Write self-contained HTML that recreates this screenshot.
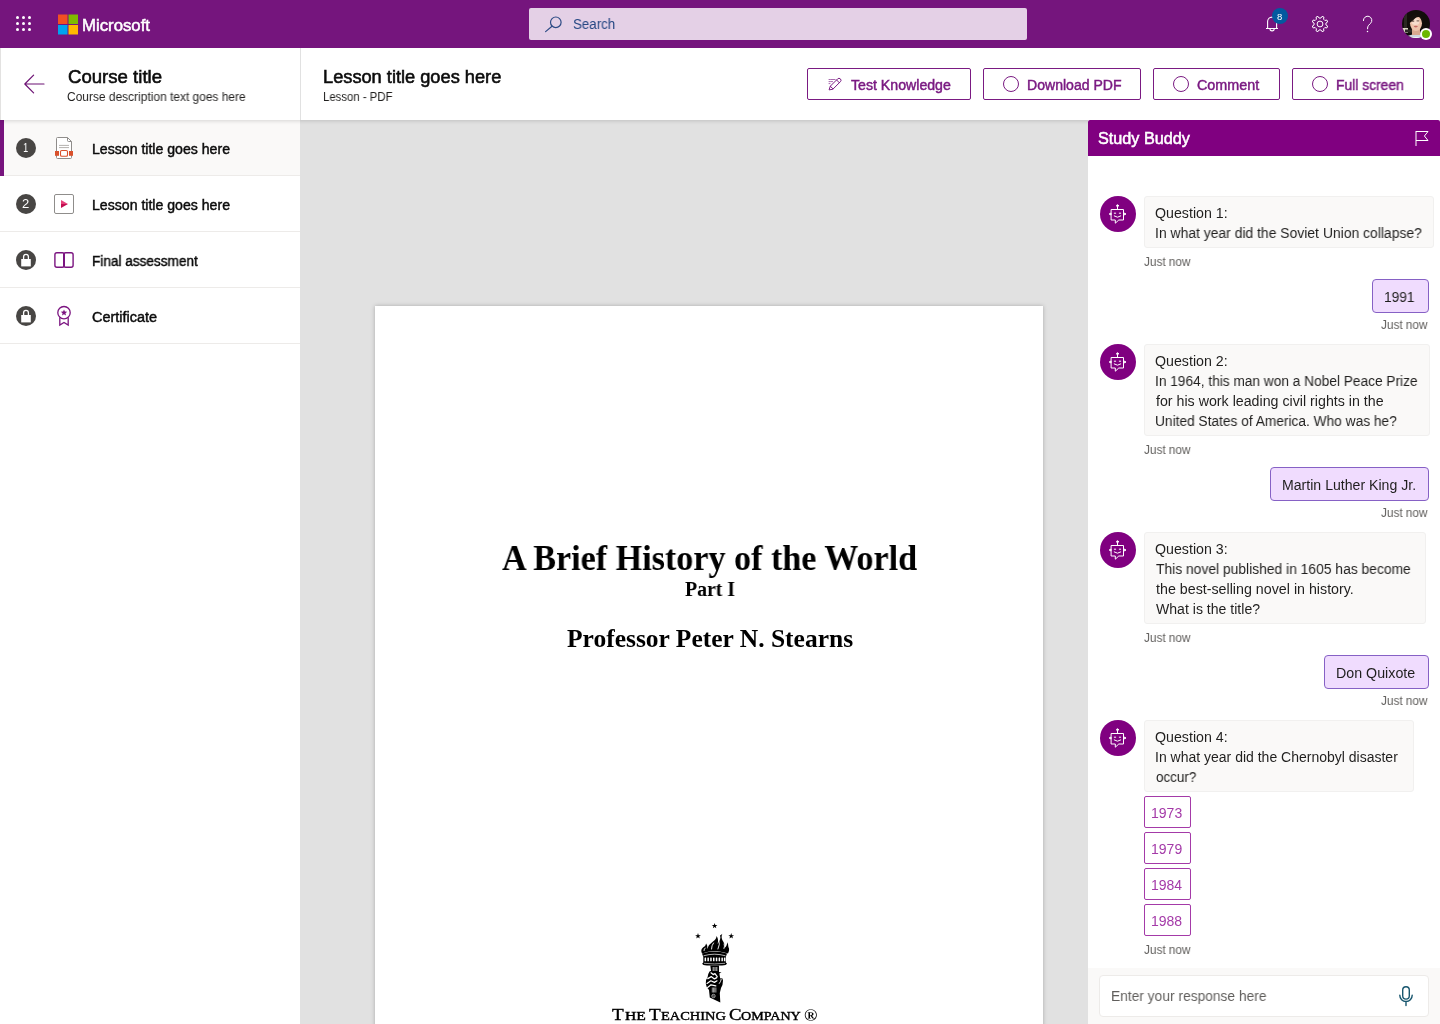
<!DOCTYPE html>
<html lang="en">
<head>
<meta charset="utf-8">
<title>Lesson - Study Buddy</title>
<style>
*{box-sizing:border-box;margin:0;padding:0}
html,body{width:1440px;height:1024px;overflow:hidden;background:#fff}
body{font-family:"Liberation Sans",sans-serif;color:#201f1e;position:relative}
#root{position:absolute;left:0;top:0;width:1440px;height:1024px}
.grp{position:absolute;left:0;top:0;width:0;height:0}
.a{position:absolute}
.t{position:absolute;white-space:nowrap;line-height:1;transform-origin:0 0;will-change:transform}
.sf{font-family:"Liberation Serif",serif}
svg{position:absolute;overflow:visible}
#top{position:absolute;left:0;top:0;width:1440px;height:48px;background:#75157d}
#search{position:absolute;left:529px;top:8px;width:498px;height:32px;background:#e4d0e6;border-radius:2px}
#sub{position:absolute;left:0;top:48px;width:1440px;height:72px;background:#fff;box-shadow:0 1px 4px rgba(0,0,0,.15)}
#subdiv{position:absolute;left:300px;top:48px;width:1px;height:72px;background:#e1e1e1}
#subl{position:absolute;left:0;top:48px;width:1px;height:72px;background:#e3e2e1}
.btn{position:absolute;top:68px;height:32px;border:1px solid #7a1a82;border-radius:2px;background:#fff}
.ring{position:absolute;top:76px;width:16px;height:16px;border:1px solid #7a1a82;border-radius:50%}
#side{position:absolute;left:0;top:120px;width:300px;height:904px;background:#fff}
.item{position:absolute;left:0;width:300px;height:56px;border-bottom:1px solid #edebe9}
.sel{background:#faf9f8}
.selbar{position:absolute;left:0;top:120px;width:4px;height:56px;background:#77147e}
.num{position:absolute;left:16px;width:20px;height:20px;border-radius:50%;background:#484644}
#main{position:absolute;left:300px;top:120px;width:788px;height:904px;background:#e1e1e1}
#page{position:absolute;left:375px;top:306px;width:668px;height:760px;background:#fff;box-shadow:0 0 4px rgba(0,0,0,.25)}
#bud{position:absolute;left:1088px;top:120px;width:352px;height:904px;background:#fff}
#budh{position:absolute;left:1088px;top:120px;width:352px;height:36px;background:#800080;border-radius:2px 2px 0 0}
.av{position:absolute;left:1100px;width:36px;height:36px;border-radius:50%;background:#800080}
.bub{position:absolute;left:1144px;background:#faf9f8;border:1px solid #f1f0ef;border-radius:3px}
.ans{position:absolute;background:#f0dcfe;border:1px solid #8661c5;border-radius:4px;height:34px}
.opt{position:absolute;left:1144px;width:47px;height:32px;border:1px solid #a43aa8;border-radius:2px;background:#fff}
#inp{position:absolute;left:1088px;top:968px;width:352px;height:56px;background:#faf9f8}
#inpb{position:absolute;left:1099px;top:975px;width:330px;height:42px;background:#fff;border:1px solid #edebe9;border-radius:4px}
</style>
</head>
<body>
<div id="root">
<div id="main"></div>
<div id="page"></div>
<span class="t sf" style="left:501.89px;top:539.75px;font-size:36px;font-weight:700;color:#000;transform:scaleX(0.9471);">A Brief History of the World</span>
<span class="t sf" style="left:684.66px;top:579.15px;font-size:20px;font-weight:700;color:#000;transform:scaleX(0.9895);">Part I</span>
<span class="t sf" style="left:567.20px;top:626.06px;font-size:25px;font-weight:700;color:#000;transform:scaleX(1.0200);">Professor Peter N. Stearns</span>
<svg width="1440" height="1024" viewBox="0 0 1440 1024" style="left:0;top:0" fill="none">
<path d="M714.60 922.90 L715.31 924.93 L717.45 924.97 L715.74 926.27 L716.36 928.33 L714.60 927.10 L712.84 928.33 L713.46 926.27 L711.75 924.97 L713.89 924.93Z" fill="#000"/>
<path d="M698.00 933.10 L698.71 935.13 L700.85 935.17 L699.14 936.47 L699.76 938.53 L698.00 937.30 L696.24 938.53 L696.86 936.47 L695.15 935.17 L697.29 935.13Z" fill="#000"/>
<path d="M731.20 933.10 L731.91 935.13 L734.05 935.17 L732.34 936.47 L732.96 938.53 L731.20 937.30 L729.44 938.53 L730.06 936.47 L728.35 935.17 L730.49 935.13Z" fill="#000"/>
<path fill="#000" d="M702 953.5 Q700.2 949.5 703 947.5 Q706 945.5 706.2 943.5 Q708.2 946 707 949 Q709 944 713 941.5 Q716.5 939 716.5 936 Q719 939.5 717.5 944 Q721.5 938.5 720 935.5 Q722 934.5 722.3 933.8 Q720.5 938 723.5 942 Q725.5 945 724.5 948 Q727.5 945.5 727 942.3 Q728.6 944 728.4 947 Q730 949.5 728 953.5 Q720 951 714.5 951 Q708 951 702 953.5Z"/>
<path stroke="#fff" stroke-width=".9" stroke-linecap="round" d="M711.5 949 Q711.5 945.5 713.5 943 M718 949 Q720.5 944 718.8 940 M724 948.5 Q725 946 724.2 944 M704 950.5 Q704 949 705.2 948"/>
<path fill="#000" d="M702 953.5 Q714.5 949.5 727 953.5 L725.8 957 V962.5 L727 963.5 Q726.5 965.3 722 965.6 H707 Q702.5 965.3 702.2 963.5 L703.3 962.5 V957Z"/>
<path stroke="#fff" stroke-width=".7" d="M703.5 955.8 Q714.5 952.6 725.5 955.8"/>
<g fill="#fff"><rect x="704.6" y="957.6" width="1.5" height="3.6" rx=".5"/><rect x="707.4" y="957.6" width="1.5" height="3.6" rx=".5"/><rect x="710.2" y="957.6" width="1.5" height="3.6" rx=".5"/><rect x="713.0" y="957.6" width="1.5" height="3.6" rx=".5"/><rect x="715.8" y="957.6" width="1.5" height="3.6" rx=".5"/><rect x="718.6" y="957.6" width="1.5" height="3.6" rx=".5"/><rect x="721.4" y="957.6" width="1.5" height="3.6" rx=".5"/><rect x="723.9" y="957.6" width="1.5" height="3.6" rx=".5"/></g>
<path stroke="#fff" stroke-width=".6" d="M704 963.3 Q714.5 964.6 725 963.3"/>
<path fill="#000" d="M710.3 965.5 H719 V972 L721.5 972.6 L719 973.4 V978 H712 Z"/>
<path stroke="#fff" stroke-width=".8" d="M713.2 967 V971 M715 967 V971 M716.8 967 V971"/>
<path fill="#000" d="M709.5 971.5 Q712.5 969.5 715 972.5 L718 975.5 L719.2 972.5 L720.2 978.5 Q722.5 977 723 980.5 Q723 985 721 988 L719.8 993 L720.3 1002.6 L709.8 997.5 L709 990 Q705.8 986.5 705.8 983.5 Q705.5 979.5 707.5 977.5 Q707.8 974 709.5 971.5Z"/>
<path stroke="#fff" stroke-width="1.25" stroke-linecap="round" stroke-linejoin="round" fill="none" d="M711 972.8 L713.2 974.6 L715 973.6 L717.2 976.6 M707.8 978.6 L711.2 976.6 L714.4 978.9 L716.8 977.6 M707 983.4 L710.8 980.8 L714.4 982.4 L717 980.8 M707.6 987.4 L711 984.8 L715.8 985.8"/>
<path stroke="#fff" stroke-width=".9" stroke-linecap="round" d="M719.3 983.5 Q721 981.5 721.3 979"/>
<path stroke="#fff" stroke-width=".6" d="M712.3 987.5 V992.5 M713.5 987.5 V992.5 M714.7 987.5 V992.5 M715.9 987.5 V992.5"/>
<circle cx="713.5" cy="996" r="1.7" stroke="#fff" stroke-width=".6"/><path d="M712.6 995.4 L714.3 996.6" stroke="#fff" stroke-width=".6"/>
</svg>
<span class="a" style="left:0;top:0;white-space:nowrap"><span class="t sf" style="left:612.33px;top:1006.14px;font-size:17.5px;font-weight:400;color:#000;transform:scaleX(1.0963);-webkit-text-stroke:.4px #000;">T</span><span class="t sf" style="left:624.73px;top:1009.83px;font-size:12.5px;font-weight:400;color:#000;transform:scaleX(1.2480);-webkit-text-stroke:.4px #000;">HE</span> <span class="t sf" style="left:648.63px;top:1006.14px;font-size:17.5px;font-weight:400;color:#000;transform:scaleX(1.0963);-webkit-text-stroke:.4px #000;">T</span><span class="t sf" style="left:661.07px;top:1009.83px;font-size:12.5px;font-weight:400;color:#000;transform:scaleX(1.1532);-webkit-text-stroke:.4px #000;">EACHING</span> <span class="t sf" style="left:728.90px;top:1006.14px;font-size:17.5px;font-weight:400;color:#000;transform:scaleX(1.0700);-webkit-text-stroke:.4px #000;">C</span><span class="t sf" style="left:740.54px;top:1009.83px;font-size:12.5px;font-weight:400;color:#000;transform:scaleX(1.1273);-webkit-text-stroke:.4px #000;">OMPANY</span> <span class="t sf" style="left:804.21px;top:1006.76px;font-size:17px;font-weight:700;color:#000;transform:scaleX(1.0522);">®</span></span>
<div id="side"></div>
<div class="item sel" style="top:120px"></div>
<div class="item" style="top:176px"></div>
<div class="item" style="top:232px"></div>
<div class="item" style="top:288px"></div>
<div class="selbar"></div>
<div class="num" style="top:138px"></div>
<div class="num" style="top:194px"></div>
<div class="num" style="top:250px"></div>
<div class="num" style="top:306px"></div>
<span class="t" style="left:91.66px;top:142.15px;font-size:14px;font-weight:400;color:#0c0c0c;transform:scaleX(1.0073);-webkit-text-stroke:0.45px #0c0c0c;">Lesson title goes here</span>
<span class="t" style="left:91.66px;top:198.15px;font-size:14px;font-weight:400;color:#0c0c0c;transform:scaleX(1.0073);-webkit-text-stroke:0.45px #0c0c0c;">Lesson title goes here</span>
<span class="t" style="left:91.70px;top:254.15px;font-size:14px;font-weight:400;color:#0c0c0c;transform:scaleX(0.9710);-webkit-text-stroke:0.45px #0c0c0c;">Final assessment</span>
<span class="t" style="left:91.94px;top:310.15px;font-size:14px;font-weight:400;color:#0c0c0c;transform:scaleX(1.0335);-webkit-text-stroke:0.45px #0c0c0c;">Certificate</span>
<span class="t" style="left:23.33px;top:142.42px;font-size:12.5px;font-weight:400;color:#fff;transform:scaleX(0.7636);">1</span>
<span class="t" style="left:22.25px;top:198.42px;font-size:12.5px;font-weight:400;color:#fff;transform:scaleX(1.0435);">2</span>
<div id="sub"></div><div id="subdiv"></div><div id="subl"></div>
<span class="t" style="left:67.93px;top:68.06px;font-size:18px;font-weight:400;color:#0c0c0c;transform:scaleX(1.0327);-webkit-text-stroke:0.58px #0c0c0c;">Course title</span>
<span class="t" style="left:67.17px;top:90.84px;font-size:12px;font-weight:400;color:#201f1e;transform:scaleX(0.9957);">Course description text goes here</span>
<span class="t" style="left:323.16px;top:68.06px;font-size:18px;font-weight:400;color:#0c0c0c;transform:scaleX(1.0123);-webkit-text-stroke:0.58px #0c0c0c;">Lesson title goes here</span>
<span class="t" style="left:323.05px;top:90.84px;font-size:12px;font-weight:400;color:#201f1e;transform:scaleX(0.9486);">Lesson - PDF</span>
<div class="btn" style="left:807px;width:164px"></div>
<div class="btn" style="left:983px;width:158px"></div>
<div class="btn" style="left:1153px;width:127px"></div>
<div class="btn" style="left:1292px;width:132px"></div>
<div class="ring" style="left:1002.7px"></div>
<div class="ring" style="left:1172.7px"></div>
<div class="ring" style="left:1312.0px"></div>
<span class="t" style="left:851.32px;top:77.75px;font-size:14px;font-weight:400;color:#7a1a82;transform:scaleX(1.0101);-webkit-text-stroke:0.45px #7a1a82;">Test Knowledge</span>
<span class="t" style="left:1026.72px;top:77.75px;font-size:14px;font-weight:400;color:#7a1a82;transform:scaleX(1.0043);-webkit-text-stroke:0.45px #7a1a82;">Download PDF</span>
<span class="t" style="left:1197.39px;top:77.75px;font-size:14px;font-weight:400;color:#7a1a82;transform:scaleX(1.0243);-webkit-text-stroke:0.45px #7a1a82;">Comment</span>
<span class="t" style="left:1335.73px;top:77.75px;font-size:14px;font-weight:400;color:#7a1a82;transform:scaleX(0.9897);-webkit-text-stroke:0.45px #7a1a82;">Full screen</span>
<div id="top"></div><div id="search"></div>
<span class="t" style="left:82.33px;top:16.53px;font-size:16.5px;font-weight:400;color:#fff;transform:scaleX(1.0159);-webkit-text-stroke:0.53px #fff;">Microsoft</span>
<span class="t" style="left:572.78px;top:17.15px;font-size:14px;font-weight:400;color:#254783;transform:scaleX(0.9526);">Search</span>
<div id="bud"></div>
<div id="budh"></div>
<span class="t" style="left:1097.51px;top:131.46px;font-size:16px;font-weight:400;color:#fff;transform:scaleX(1.0133);-webkit-text-stroke:0.51px #fff;">Study Buddy</span>
<div class="av" style="top:196px"></div>
<div class="bub" style="top:196px;width:290px;height:52px"></div>
<span class="t" style="left:1155.25px;top:206.15px;font-size:14px;font-weight:400;color:#201f1e;transform:scaleX(1.0147);">Question 1:</span>
<span class="t" style="left:1155.05px;top:226.15px;font-size:14px;font-weight:400;color:#201f1e;transform:scaleX(0.9938);">In what year did the Soviet Union collapse?</span>
<span class="t" style="left:1143.74px;top:256.14px;font-size:12px;font-weight:400;color:#605e5c;transform:scaleX(0.9806);">Just now</span>
<div class="ans" style="left:1372px;top:279px;width:57px"></div>
<span class="t" style="left:1384.27px;top:290.15px;font-size:14px;font-weight:400;color:#201f1e;transform:scaleX(0.9823);">1991</span>
<span class="t" style="left:1380.74px;top:318.59px;font-size:12px;font-weight:400;color:#605e5c;transform:scaleX(0.9806);">Just now</span>
<div class="av" style="top:344px"></div>
<div class="bub" style="top:344px;width:286px;height:92px"></div>
<span class="t" style="left:1155.25px;top:354.15px;font-size:14px;font-weight:400;color:#201f1e;transform:scaleX(1.0147);">Question 2:</span>
<span class="t" style="left:1155.07px;top:374.15px;font-size:14px;font-weight:400;color:#201f1e;transform:scaleX(0.9779);">In 1964, this man won a Nobel Peace Prize</span>
<span class="t" style="left:1156.13px;top:394.15px;font-size:14px;font-weight:400;color:#201f1e;transform:scaleX(1.0155);">for his work leading civil rights in the</span>
<span class="t" style="left:1155.39px;top:414.15px;font-size:14px;font-weight:400;color:#201f1e;transform:scaleX(0.9802);">United States of America. Who was he?</span>
<span class="t" style="left:1143.74px;top:444.14px;font-size:12px;font-weight:400;color:#605e5c;transform:scaleX(0.9806);">Just now</span>
<div class="ans" style="left:1270px;top:467px;width:159px"></div>
<span class="t" style="left:1281.82px;top:477.65px;font-size:14px;font-weight:400;color:#201f1e;transform:scaleX(1.0081);">Martin Luther King Jr.</span>
<span class="t" style="left:1380.74px;top:506.59px;font-size:12px;font-weight:400;color:#605e5c;transform:scaleX(0.9806);">Just now</span>
<div class="av" style="top:532px"></div>
<div class="bub" style="top:532px;width:282px;height:92px"></div>
<span class="t" style="left:1155.25px;top:542.15px;font-size:14px;font-weight:400;color:#201f1e;transform:scaleX(1.0147);">Question 3:</span>
<span class="t" style="left:1155.98px;top:562.15px;font-size:14px;font-weight:400;color:#201f1e;transform:scaleX(0.9889);">This novel published in 1605 has become</span>
<span class="t" style="left:1156.05px;top:582.15px;font-size:14px;font-weight:400;color:#201f1e;transform:scaleX(1.0182);">the best-selling novel in history.</span>
<span class="t" style="left:1155.74px;top:602.15px;font-size:14px;font-weight:400;color:#201f1e;transform:scaleX(1.0053);">What is the title?</span>
<span class="t" style="left:1143.74px;top:632.14px;font-size:12px;font-weight:400;color:#605e5c;transform:scaleX(0.9806);">Just now</span>
<div class="ans" style="left:1324px;top:655px;width:105px"></div>
<span class="t" style="left:1336.14px;top:666.15px;font-size:14px;font-weight:400;color:#201f1e;transform:scaleX(1.0177);">Don Quixote</span>
<span class="t" style="left:1380.74px;top:694.84px;font-size:12px;font-weight:400;color:#605e5c;transform:scaleX(0.9806);">Just now</span>
<div class="av" style="top:720px"></div>
<div class="bub" style="top:720px;width:270px;height:72px"></div>
<span class="t" style="left:1155.25px;top:730.15px;font-size:14px;font-weight:400;color:#201f1e;transform:scaleX(1.0147);">Question 4:</span>
<span class="t" style="left:1155.04px;top:750.15px;font-size:14px;font-weight:400;color:#201f1e;transform:scaleX(0.9986);">In what year did the Chernobyl disaster</span>
<span class="t" style="left:1155.64px;top:770.15px;font-size:14px;font-weight:400;color:#201f1e;transform:scaleX(0.9596);">occur?</span>
<div class="opt" style="top:796px"></div>
<span class="t" style="left:1151.25px;top:805.90px;font-size:14px;font-weight:400;color:#a43aa8;transform:scaleX(1.0021);">1973</span>
<div class="opt" style="top:832px"></div>
<span class="t" style="left:1151.25px;top:841.90px;font-size:14px;font-weight:400;color:#a43aa8;transform:scaleX(1.0011);">1979</span>
<div class="opt" style="top:868px"></div>
<span class="t" style="left:1151.26px;top:877.90px;font-size:14px;font-weight:400;color:#a43aa8;transform:scaleX(0.9930);">1984</span>
<div class="opt" style="top:904px"></div>
<span class="t" style="left:1151.25px;top:913.90px;font-size:14px;font-weight:400;color:#a43aa8;transform:scaleX(1.0006);">1988</span>
<span class="t" style="left:1143.74px;top:944.34px;font-size:12px;font-weight:400;color:#605e5c;transform:scaleX(0.9806);">Just now</span>
<div id="inp"></div><div id="inpb"></div>
<span class="t" style="left:1111.43px;top:988.55px;font-size:14px;font-weight:400;color:#605e5c;transform:scaleX(0.9840);">Enter your response here</span>
<svg width="1440" height="1024" viewBox="0 0 1440 1024" style="left:0;top:0" fill="none">
<g fill="#fff"><circle cx="17.5" cy="17.5" r="1.5"/><circle cx="17.5" cy="23.5" r="1.5"/><circle cx="17.5" cy="29.5" r="1.5"/><circle cx="23.5" cy="17.5" r="1.5"/><circle cx="23.5" cy="23.5" r="1.5"/><circle cx="23.5" cy="29.5" r="1.5"/><circle cx="29.5" cy="17.5" r="1.5"/><circle cx="29.5" cy="23.5" r="1.5"/><circle cx="29.5" cy="29.5" r="1.5"/></g>
<rect x="58" y="14.5" width="9.5" height="9.5" fill="#f25022"/><rect x="68.5" y="14.5" width="9.5" height="9.5" fill="#7fba00"/><rect x="58" y="25" width="9.5" height="9.5" fill="#00a4ef"/><rect x="68.5" y="25" width="9.5" height="9.5" fill="#ffb900"/>
<g stroke="#2d4b85" stroke-width="1.2" stroke-linecap="round"><circle cx="555.8" cy="22.3" r="5.3"/><path d="M552 26.2 L545.6 31.6"/></g>
<g stroke="#fff" stroke-width="1.1" stroke-linejoin="round"><path d="M1266 28.5 H1278 M1267.6 28.5 V21.6 A4.5 4.5 0 0 1 1276.6 21.6 V28.5"/><path d="M1270 28.8 A2.1 2.1 0 0 0 1274.2 28.8"/></g>
<circle cx="1280" cy="16" r="8" fill="#03599f"/>
<path d="M1320.94 18.07 L1322.02 16.36 L1323.97 17.17 L1323.53 19.15 L1324.85 20.47 L1326.83 20.03 L1327.64 21.98 L1325.93 23.06 L1325.93 24.94 L1327.64 26.02 L1326.83 27.97 L1324.85 27.53 L1323.53 28.85 L1323.97 30.83 L1322.02 31.64 L1320.94 29.93 L1319.06 29.93 L1317.98 31.64 L1316.03 30.83 L1316.47 28.85 L1315.15 27.53 L1313.17 27.97 L1312.36 26.02 L1314.07 24.94 L1314.07 23.06 L1312.36 21.98 L1313.17 20.03 L1315.15 20.47 L1316.47 19.15 L1316.03 17.17 L1317.98 16.36 L1319.06 18.07Z" stroke="#fff" stroke-width="1" stroke-linejoin="round"/><circle cx="1320" cy="24" r="2.9" stroke="#fff" stroke-width="1"/>
<path d="M1363.4 20.6 A4.2 4.2 0 1 1 1370.6 23.3 L1368.6 25.3 Q1367.5 26.5 1367.5 28.8" stroke="#fff" stroke-width="1" stroke-linecap="round"/><circle cx="1367.5" cy="31.5" r="0.75" fill="#fff"/>
<defs><clipPath id="avc"><circle cx="1416" cy="24" r="14"/></clipPath></defs>
<g clip-path="url(#avc)"><rect x="1402" y="10" width="28" height="28" fill="#120e0b"/><rect x="1404" y="14" width="3" height="16" fill="#2a2822"/><rect x="1402" y="28" width="6" height="5" fill="#ddd8c6"/><rect x="1405" y="29.5" width="7" height="3" fill="#2c2a26"/><path d="M1404 38 Q1409 34 1416 34.5 Q1423 34 1428 38Z" fill="#cfd6e2"/><path d="M1407 37 H1425 V38 H1407Z" fill="#f4f4f6"/><rect x="1412" y="28" width="8" height="7" fill="#d9a88f"/><ellipse cx="1416" cy="23.3" rx="6" ry="7.6" fill="#edc3ab"/><ellipse cx="1415.5" cy="21.5" rx="4" ry="3.5" fill="#f6dccd"/><path d="M1409.3 23 Q1409 16 1414.5 14.6 Q1419 13.8 1421.5 16 Q1424 18.5 1423 25 Q1422.5 20 1420 17.2 Q1417.5 16.3 1415.2 18.2 Q1413 20.8 1409.3 23Z" fill="#15100d"/><ellipse cx="1415.8" cy="26.6" rx="2" ry="0.8" fill="#c46a68"/><rect x="1411.6" y="20.6" width="2.6" height="1" fill="#4a352c"/><rect x="1416.6" y="20.4" width="2.6" height="1" fill="#6b5145"/></g>
<circle cx="1426" cy="34" r="6" fill="#fff"/><circle cx="1426" cy="34" r="4" fill="#6bb700"/>
<path d="M44 84 H24.8 M33.6 75.2 L24.8 84 L33.6 92.8" stroke="#6d1274" stroke-width="1.2" stroke-linecap="round" stroke-linejoin="round"/>
<g stroke="#7a1a82" stroke-width="1" stroke-linejoin="round" stroke-linecap="round"><path d="M829.2 89.5 L830.3 86.2 L837.6 78.9 A1.9 1.9 0 0 1 840.4 81.7 L833.1 89 Z"/><path d="M836.6 80 L839.3 82.7 M830.4 86.3 L832.9 88.8"/><path d="M829 79.5 H835 M829 81.6 H832.6 M829 83.6 H830.6" stroke-opacity=".65" stroke-dasharray="1 .8 10"/></g>
<g stroke="#8f8d8b" stroke-width="1"><path d="M57.5 137.5 H67.5 L71.5 141.5 V157.5 Q71.5 158.5 70.5 158.5 H57.5 Q56.5 158.5 56.5 157.5 V138.5 Q56.5 137.5 57.5 137.5Z" fill="#fff"/><path d="M67.5 137.5 V140.5 Q67.5 141.5 68.5 141.5 H71.5"/><path d="M59 145.4 H69 M59 147.6 H69" stroke="#b5b2af"/></g>
<rect x="55" y="151" width="4" height="4.8" fill="#d9512c"/><rect x="69" y="151" width="4" height="4.8" fill="#d9512c"/><rect x="60.5" y="150.5" width="7" height="5.8" rx="1.3" stroke="#d9512c" stroke-width="1.1" fill="#fff"/>
<rect x="54.5" y="194.5" width="19" height="19" rx="1.5" stroke="#8f8d8b" stroke-width="1" fill="#fff"/>
<path d="M61 200 L68 204 L61 204Z" fill="#e6427a"/><path d="M61 204 L68 204 L61 208Z" fill="#c30e50"/>
<g stroke="#7b1480" stroke-width="1.4"><rect x="54.9" y="252.7" width="9.4" height="14.6" rx="2"/><rect x="63.7" y="252.7" width="9.4" height="14.6" rx="2"/></g>
<g stroke="#7b1480" stroke-width="1.3" stroke-linejoin="miter"><circle cx="64" cy="312.7" r="6.2"/><path d="M59.8 317.6 V325 L64 322.4 L68.2 325 V317.6"/></g><path d="M64.00 309.40 L64.88 311.59 L67.23 311.75 L65.43 313.26 L66.00 315.55 L64.00 314.30 L62.00 315.55 L62.57 313.26 L60.77 311.75 L63.12 311.59Z" fill="#7b1480"/>
<rect x="21.2" y="259.0" width="9.6" height="7.4" fill="#fff"/><path d="M23.6 259.5 V256.8 A2.4 2.4 0 0 1 28.4 256.8 V259.5" stroke="#fff" stroke-width="1.3"/>
<rect x="21.2" y="315.0" width="9.6" height="7.4" fill="#fff"/><path d="M23.6 315.5 V312.8 A2.4 2.4 0 0 1 28.4 312.8 V315.5" stroke="#fff" stroke-width="1.3"/>
<path d="M1416 131 V146 M1416 131.5 H1428 L1424.4 136 L1428 140.5 H1416" stroke="#fff" stroke-width="1" stroke-linejoin="miter"/>
<g transform="translate(0 214)" stroke="#fff" stroke-width="1" stroke-linejoin="round" stroke-linecap="round"><path d="M1111.5 -4.5 H1123.5 V6 H1118.8 L1115.3 9.2 V6 H1111.5Z"/><path d="M1117.5 -4.5 V-7.5"/><circle cx="1117.5" cy="-8.3" r="0.9" fill="#fff"/><circle cx="1110.3" cy="0" r="0.8" fill="#fff"/><circle cx="1124.7" cy="0" r="0.8" fill="#fff"/><path d="M1114.3 -0.8 H1115.7 M1119.3 -0.8 H1120.7"/><path d="M1114.2 2 Q1117.5 4.6 1120.8 2"/></g>
<g transform="translate(0 362)" stroke="#fff" stroke-width="1" stroke-linejoin="round" stroke-linecap="round"><path d="M1111.5 -4.5 H1123.5 V6 H1118.8 L1115.3 9.2 V6 H1111.5Z"/><path d="M1117.5 -4.5 V-7.5"/><circle cx="1117.5" cy="-8.3" r="0.9" fill="#fff"/><circle cx="1110.3" cy="0" r="0.8" fill="#fff"/><circle cx="1124.7" cy="0" r="0.8" fill="#fff"/><path d="M1114.3 -0.8 H1115.7 M1119.3 -0.8 H1120.7"/><path d="M1114.2 2 Q1117.5 4.6 1120.8 2"/></g>
<g transform="translate(0 550)" stroke="#fff" stroke-width="1" stroke-linejoin="round" stroke-linecap="round"><path d="M1111.5 -4.5 H1123.5 V6 H1118.8 L1115.3 9.2 V6 H1111.5Z"/><path d="M1117.5 -4.5 V-7.5"/><circle cx="1117.5" cy="-8.3" r="0.9" fill="#fff"/><circle cx="1110.3" cy="0" r="0.8" fill="#fff"/><circle cx="1124.7" cy="0" r="0.8" fill="#fff"/><path d="M1114.3 -0.8 H1115.7 M1119.3 -0.8 H1120.7"/><path d="M1114.2 2 Q1117.5 4.6 1120.8 2"/></g>
<g transform="translate(0 738)" stroke="#fff" stroke-width="1" stroke-linejoin="round" stroke-linecap="round"><path d="M1111.5 -4.5 H1123.5 V6 H1118.8 L1115.3 9.2 V6 H1111.5Z"/><path d="M1117.5 -4.5 V-7.5"/><circle cx="1117.5" cy="-8.3" r="0.9" fill="#fff"/><circle cx="1110.3" cy="0" r="0.8" fill="#fff"/><circle cx="1124.7" cy="0" r="0.8" fill="#fff"/><path d="M1114.3 -0.8 H1115.7 M1119.3 -0.8 H1120.7"/><path d="M1114.2 2 Q1117.5 4.6 1120.8 2"/></g>
<g stroke="#17566e" stroke-width="1.4" stroke-linecap="round"><rect x="1402.7" y="986.7" width="6.6" height="12.4" rx="3.3"/><path d="M1399.8 995.3 A6.2 6.2 0 0 0 1412.2 995.3 M1406 1002 V1005.6"/></g>
</svg>
<span class="t" style="left:1277.45px;top:11.96px;font-size:9.5px;font-weight:400;color:#fff;transform:scaleX(0.9333);">8</span>
</div>
</body>
</html>
